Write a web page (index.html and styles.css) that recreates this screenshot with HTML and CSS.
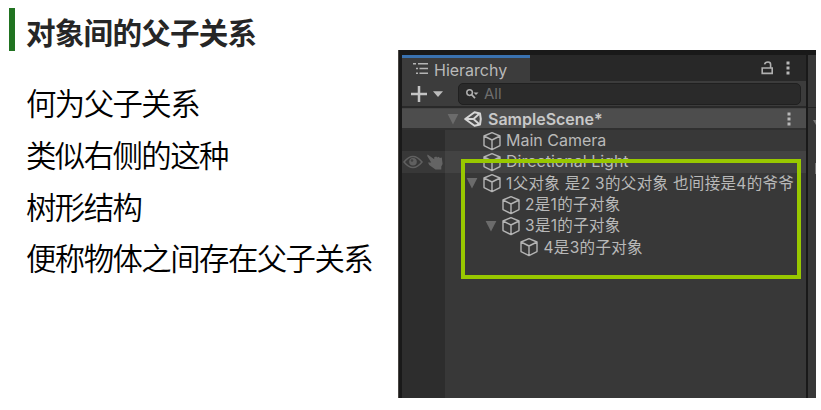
FILE: index.html
```html
<!DOCTYPE html>
<html lang="zh-CN">
<head>
<meta charset="utf-8">
<title>对象间的父子关系</title>
<link rel="stylesheet" href="styles.css">
</head>
<body>
<svg width="0" height="0" class="defs">
  <symbol id="cube" viewBox="0 0 20 20"><path d="M10 1.6 18 5v9.6L10 18.6 2 14.6V5ZM2 5 10 9 18 5M10 9v9.6" fill="none" stroke="#b4b4b4" stroke-width="1.4" stroke-linejoin="round"/></symbol>
  <symbol id="arrow" viewBox="0 0 12 12"><path d="M.6 1h10.8L6 11.4Z" fill="#6b6b6b"/></symbol>
  <symbol id="dots" viewBox="0 0 6 16"><path d="M1.5 1.5h3v3h-3zM1.5 6.5h3v3h-3zM1.5 11.5h3v3h-3z" fill="#b8b8b8"/></symbol>
</svg>
<main class="slide">
  <section class="notes">
    <h1 class="title">对象间的父子关系</h1>
    <div class="lines">
      <p>何为父子关系</p>
      <p>类似右侧的这种</p>
      <p>树形结构</p>
      <p>便称物体之间存在父子关系</p>
    </div>
  </section>
  <section class="editor">
    <div class="window">
      <div class="tabs">
        <div class="tab">
          <svg width="16" height="14" viewBox="0 0 16 14"><path d="M0 1.7h3M5 1.7h10M3 6.5h2M6.5 6.5H15M3 11.3h2M6.5 11.3H15" fill="none" stroke="#b4b4b4" stroke-width="1.5"/></svg>
          <span class="tab-name">Hierarchy</span>
        </div>
        <div class="tab-tools">
          <svg width="13" height="16" viewBox="0 0 13 16"><path d="M1.2 8h10v5.4h-10ZM9.6 8V4.5Q9.6 2 7 2 4 2 3.6 4.4" fill="none" stroke="#b0b0b0" stroke-width="1.6"/></svg>
          <svg width="6" height="16"><use href="#dots"/></svg>
        </div>
      </div>
      <div class="toolbar">
        <svg class="plus" width="34" height="18" viewBox="0 0 34 18"><path d="M0 9h16M8 1v16" stroke="#c4c4c4" stroke-width="2.5"/><path d="M22 6.3h10L27 12Z" fill="#bcbcbc"/></svg>
        <div class="search">
          <svg width="14" height="12" viewBox="0 0 14 12"><circle cx="3.6" cy="4.6" r="2.8" fill="none" stroke="#b0b0b0" stroke-width="1.5"/><path d="m5.6 6.6 3.4 3.6" stroke="#b0b0b0" stroke-width="1.7"/><path d="M7.5 4.5h5L10 7Z" fill="#b0b0b0"/></svg>
          <span>All</span>
        </div>
      </div>
      <div class="scene">
        <svg width="12" height="12"><use href="#arrow"/></svg>
        <svg class="unity" width="18" height="16" viewBox="0 0 18 16"><path d="M1.2 8 10.5 1.2 16 2.5 16.8 8 16 13.5 10.5 14.8Z" fill="none" stroke="#d6d6d6" stroke-width="2" stroke-linejoin="round"/><path d="M2 8h7.5l5.5-5M9.5 8l5.5 5" fill="none" stroke="#d6d6d6" stroke-width="1.8"/></svg>
        <span class="scene-name">SampleScene*</span>
        <svg class="scene-menu" width="6" height="16"><use href="#dots"/></svg>
      </div>
      <div class="tree">
        <div class="row"><div class="gutter"></div><div class="item"><svg class="cube" width="20" height="20"><use href="#cube"/></svg><span>Main Camera</span></div></div>
        <div class="row hover"><div class="gutter">
          <svg width="20" height="14" viewBox="0 0 20 14"><path d="M1 7q9-11 18 0-9 11-18 0Z" fill="none" stroke="#606060" stroke-width="1.5"/><circle cx="10" cy="6.8" r="3.8" fill="#606060"/><circle cx="9" cy="5.5" r="1.3" fill="#414141"/></svg>
          <svg width="17" height="16" viewBox="0 0 17 16"><path d="m.6.6 6.6 4.6V3.2l2-.8 1 1.2 1.6-.8 1 1.2 2-.4.8 6.5-1.3 2.3v3L8.5 15.5 2.2 11 1 8.4l3.2.2L.2 2Z" fill="#646464"/></svg>
        </div><div class="item"><svg class="cube" width="20" height="20"><use href="#cube"/></svg><span>Directional Light</span></div></div>
        <div class="row"><div class="gutter"></div><div class="item open"><svg width="12" height="12"><use href="#arrow"/></svg><svg class="cube" width="20" height="20"><use href="#cube"/></svg><span class="zh long">1父对象 是2 3的父对象 也间接是4的爷爷</span></div></div>
        <div class="row"><div class="gutter"></div><div class="item child"><svg class="cube" width="20" height="20"><use href="#cube"/></svg><span class="zh">2是1的子对象</span></div></div>
        <div class="row"><div class="gutter"></div><div class="item child open"><svg width="12" height="12"><use href="#arrow"/></svg><svg class="cube" width="20" height="20"><use href="#cube"/></svg><span class="zh">3是1的子对象</span></div></div>
        <div class="row"><div class="gutter"></div><div class="item grandchild"><svg class="cube" width="20" height="20"><use href="#cube"/></svg><span class="zh">4是3的子对象</span></div></div>
        <div class="row rest"><div class="gutter"></div></div>
      </div>
    </div>
    <div class="neighbor">
      <div class="neighbor-head"></div>
      <div class="neighbor-row"><svg width="3" height="5" viewBox="0 0 3 5"><path d="M0 0h3v5Z" fill="#777"/></svg></div>
      <div class="neighbor-field"></div>
    </div>
    <div class="highlight"></div>
  </section>
</main>
</body>
</html>
```
FILE: styles.css
```css
* { box-sizing: border-box; }
body { margin: 0; background: #fff; overflow: hidden; }
svg { display: block; flex: none; }
.defs { position: absolute; }
.slide { display: flex; width: 821px; height: 410px; }

.notes { width: 398px; padding: 8px 0 0 9px; font-family: "Noto Sans CJK SC", sans-serif; white-space: nowrap; }
.title { margin: 0; height: 43px; padding-left: 11px; border-left: 6px solid #217321; color: #262626; font-size: 29.6px; letter-spacing: -.8px; line-height: 48px; font-weight: 700; }
.lines { padding: 26px 0 0 17px; color: #000; font-size: 30.4px; letter-spacing: -1.55px; font-weight: 350; }
.lines p { margin: 0; height: 51.8px; line-height: 51.8px; }

.editor { position: relative; display: flex; width: 418px; height: 348px; margin-top: 50px; padding: 5px 0 0 4px; background: #191919; color: #b9b9b9; font: 16px/21px Inter, "Noto Sans CJK SC", sans-serif; white-space: nowrap; box-shadow: inset 1px 0 #484542; }
.window { display: flex; flex-direction: column; width: 404px; background: #383838; }
.tabs { display: flex; justify-content: space-between; height: 26px; background: #282828; }
.tab { display: flex; align-items: center; gap: 5px; width: 128px; padding: 0 0 0 11px; background: #3c3c3c; border-top: 3px solid #3a72b0; }
.tab svg { margin-top: -1px; }
.tab-name { font-size: 16px; padding-top: 1px; }
.tab-tools { display: flex; align-items: center; gap: 11px; padding-right: 15px; }
.toolbar { display: flex; align-items: center; height: 27px; padding: 0 5px 0 9px; background: #3c3c3c; border-bottom: 2px solid #292929; }
.plus { margin-right: 13px; }
.search { display: flex; align-items: center; gap: 4px; flex: 1; height: 22px; padding-left: 7px; border: 1px solid #202020; border-radius: 5px; background: #2a2a2a; color: #6e6e6e; font-size: 15px; }
.scene { display: flex; align-items: center; height: 22px; padding: 1px 14px 0 45px; background: #4d4d4d; border-bottom: 2px solid #303030; border-top: 1px solid #454545; }
.unity { margin: 0 6px 0 5px; }
.scene-name { font-weight: 600; color: #c8c8c8; }
.scene-menu { margin-left: auto; }

.tree { display: flex; flex-direction: column; flex: 1; }
.row { display: flex; height: 21.3px; }
.rest { height: auto; flex: 1; }
.gutter { display: flex; align-items: center; gap: 4px; width: 43px; padding-left: 1px; background: #2d2d2d; }
.hover { background: #434343; }
.hover .gutter { background: #383838; }
.item { display: flex; align-items: center; padding-left: 36.5px; }
.item.open { padding-left: 20.5px; }
.item.open .cube { margin-left: 4px; }
.item.child { padding-left: 55.5px; }
.item.child.open { padding-left: 39.5px; }
.item.grandchild { padding-left: 74px; }
.cube { margin-right: 4.5px; }
.zh { font-size: 15.5px; letter-spacing: .33px; }

.neighbor { width: 8px; margin-left: 2px; background: #383838; }
.neighbor-head { height: 53px; border-bottom: 1px solid #242424; }
.neighbor-row { display: flex; justify-content: flex-end; height: 55px; padding-top: 12px; }
.neighbor-field { width: 1px; height: 11px; margin-left: auto; background: #777; }

.highlight { position: absolute; left: 62.5px; top: 109px; width: 340px; height: 120px; border: 4px solid #98c800; }
```
